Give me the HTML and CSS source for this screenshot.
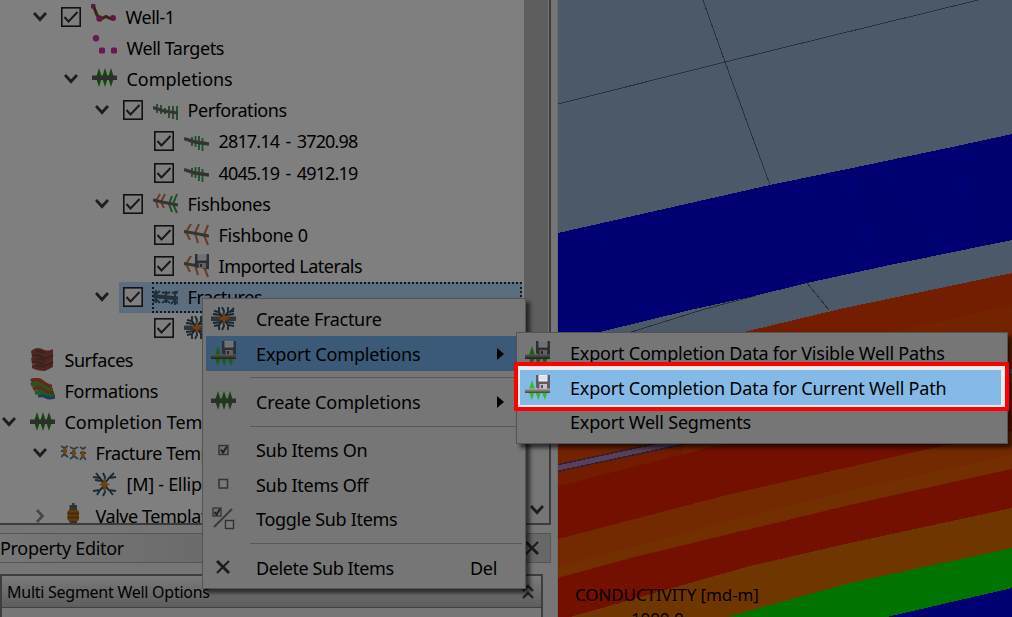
FILE: index.html
```
<!DOCTYPE html>
<html lang="en">
<head>
<meta charset="utf-8">
<title>Export Completions</title>
<link rel="stylesheet" href="styles.css">
</head>
<body>
<svg class="defs" width="0" height="0">
  <defs>
    <linearGradient id="pipe" x1="0" y1="0" x2="0" y2="1"><stop offset="0" stop-color="#b0b0b0"/><stop offset="1" stop-color="#404040"/></linearGradient>
    <symbol id="i-chev" viewBox="0 0 14 14"><path d="M1 3l6 6.500L13 3" fill="none" stroke="#3c3c3c" stroke-width="2.900"/></symbol>
    <symbol id="i-chevr" viewBox="0 0 14 14"><path d="M4 1l5.500 6L4 13" fill="none" stroke="#8a8a8a" stroke-width="2.600"/></symbol>
    <symbol id="i-check" viewBox="0 0 20 20"><rect x=".8" y=".8" width="18.400" height="18.400" fill="#fff" stroke="#222" stroke-width="1.600"/><path d="M3.500 10l4 4.500L16.500 5" fill="none" stroke="#333" stroke-width="2"/></symbol>
    <symbol id="i-well" viewBox="0 0 25 25"><path d="M2 1l4 10 3 4.500 6-3 4 2 3-.5" fill="none" stroke="#6e4a14" stroke-width="3"/><g fill="#c02a92"><rect x="0" y="0" width="4.500" height="4.500" rx="1"/><circle cx="8.500" cy="14.500" r="3.200"/><circle cx="22" cy="14" r="3"/></g></symbol>
    <symbol id="i-targets" viewBox="0 0 25 25"><g fill="#cc30a6"><circle cx="4" cy="3.200" r="3.200"/><rect x="7" y="12.500" width="6" height="6" rx="1.500"/><rect x="19" y="12.500" width="6" height="6" rx="1.500"/></g></symbol>
    <symbol id="i-comp" viewBox="0 0 25 25"><g fill="#288c14"><path d="M7 2l3 9.500L7 21l-3-9.500zM13 2l3 9.500L13 21l-3-9.500zM19 2l3 9.500L19 21l-3-9.500z"/></g><rect y="9.500" width="25" height="4.500" fill="#5c5c5c"/></symbol>
    <symbol id="i-perfs" viewBox="0 0 25 25"><path d="M4 6v9M8 7v9M16 8v12M20 8v13M24 8v14M12 10v6" stroke="#46a050" stroke-width="2"/><path d="M0 9.500l11 3.500 14 2" fill="none" stroke="#686868" stroke-width="3.200"/></symbol>
    <symbol id="i-perf" viewBox="0 0 25 25"><path d="M8 8v9M11.500 7v11M15 7v14M18.500 9v13" stroke="#46a050" stroke-width="1.900"/><path d="M0 9.500l11 3.500 14 2" fill="none" stroke="#686868" stroke-width="3.400"/></symbol>
    <symbol id="i-fishes" viewBox="0 0 25 25"><g fill="none" stroke="#dc7448" stroke-width="2"><path d="M7 3L3 10l2 7M12 3L8 11l3 6"/></g><g fill="none" stroke="#3c9c4c" stroke-width="2"><path d="M19 5l-3 8 3 8M24 3l-4 10 4 9"/></g><path d="M0 9l9 2 16 3" fill="none" stroke="#686868" stroke-width="3"/></symbol>
    <symbol id="i-fish" viewBox="0 0 25 25"><g fill="none" stroke="#dc7448" stroke-width="2.100"><path d="M7 2L2 10l4 8M15 2l-4 9 3 10M24 3l-4 10 4 10"/></g><path d="M0 9.500l9 1.500 16 3" fill="none" stroke="#686868" stroke-width="3"/></symbol>
    <symbol id="i-disk" viewBox="0 0 14 14"><path d="M0 0h14v14H2l-2-2z" fill="#5c5c66"/><rect x="2.500" width="9" height="6.500" fill="#eef0f4"/><path d="M2.500 2h9M2.500 4h9" stroke="#c6cad2" stroke-width=".7"/><rect x="3.500" y="9" width="7.500" height="5" fill="#c4c4c8"/><rect x="5" y="10" width="2" height="3" fill="#505058"/></symbol>
    <symbol id="i-fishdisk" viewBox="0 0 25 25"><use href="#i-fish" width="25" height="25"/><use href="#i-disk" x="11" y="0" width="14" height="14"/></symbol>
    <symbol id="i-frac" viewBox="0 0 25 25"><rect y="9.500" width="25" height="4.500" fill="#666"/><g fill="none" stroke="#2c4c60" stroke-width="1.800"><path d="M12 11L8 5 3 4M8 5V0M10 8L2 7M12 10l1-6-2-4M13 10l4-5 6-1M17 5V0M15 8l8-1M19 5l4-4"/><path d="M12 13l-4 5-5 1M8 18v5M10 15l-8 1M12 13l1 6-2 4M13 13l4 5 6 1M17 18v5M15 15l8 1"/></g><path d="M13 5l1.500 4.500 4 2-4 2L13 18l-1.500-4.500-4-2 4-2z" fill="#ec7a18"/></symbol>
    <symbol id="i-fracx" viewBox="0 0 25 25"><g fill="none" stroke="#345468" stroke-width="1.900"><path d="M12 12L8 6 1 5M8 6L4 1M10 9L3 8M12 11l1-6-2-4M13 11l4-5 7-1M17 6l5-5"/><path d="M12 14l-4 4-7 1M8 18l-3 5M12 14l1 6-2 4M13 14l4 4 7 1M17 18l4 5"/></g><path d="M12.500 6l1.500 4.500 4 2-4 2-1.500 6-1.500-6-4-2 4-2z" fill="#e08020"/></symbol>
    <symbol id="i-fracs" viewBox="0 0 25 25"><g fill="none" stroke="#386484" stroke-width="2"><path d="M0 7l3 2 4-3M3 5v13M0 17l3-3 4 4M9 7l4 2 4-2M13 6v12M9 18l4-3 4 3M19 7l3 2 3-3M22 6v14M18 19l4-4 3 4"/></g><path d="M0 11l25 2.500" stroke="#4c6470" stroke-width="4"/></symbol>
    <symbol id="i-fractpl" viewBox="0 0 25 25"><g fill="none" stroke="#5c7888" stroke-width="1.800"><path d="M0 5l3 2 4-2M0 10h6M0 16l3-3 4 3M9 6l4 2 4-2M9 12h6M9 18l4-3 4 3M19 6l3 2 3-2M19 12h6M19 19l3-4 3 4"/></g><g fill="#d88a28"><rect x="2" y="7" width="3.500" height="6"/><rect x="11" y="9" width="3.500" height="6"/><rect x="20" y="10" width="3.500" height="6"/></g></symbol>
    <symbol id="i-surf" viewBox="0 0 25 25"><path d="M1 4Q6-1 12 2t11 0v7q-5 4-10 1T2 10zM1 11q6-4 12-1t10-1v7q-5 4-11 1T2 17zM2 18q5-4 11-1t10-1v4l-8 4q-8 0-13-3z" fill="#a44c3c"/><path d="M2 9q6-2 11 1t10-2M2 16q6-2 11 1t10-2M6 4q6 0 9 2M6 12q6-1 9 2M6 19q5-1 9 2" fill="none" stroke="#69483e" stroke-width="1.800"/></symbol>
    <symbol id="i-form" viewBox="0 0 25 25"><g fill="none" stroke-width="4.200"><path d="M1 3q7-3 11 1t10 5" stroke="#ca5138"/><path d="M1 7q7-3 11 1t11 4" stroke="#52aa38"/><path d="M3 11q6-3 10 1t11 3" stroke="#b65a3c"/><path d="M5 15q6-2 9 1t11 2" stroke="#44b044"/><path d="M8 18q5-1 8 1t9 0" stroke="#3876b4" stroke-width="3"/></g></symbol>
    <symbol id="i-valve" viewBox="0 0 25 25"><path d="M8.500 2H11V0h2.500V2H16v22H8.500z" fill="#656565"/><rect x="6.500" y="7" width="11.500" height="11" rx="2" fill="#c07218"/><path d="M6.500 10.500H18M6.500 14.500H18" stroke="#8a4c10" stroke-width="1.300"/></symbol>
    <symbol id="i-export" viewBox="0 0 25 25"><g fill="#3aba28"><path d="M7 5l3 9.500H4zM3.500 16h6.500L6.800 25zM10 16h6.500l-3.200 9zM16.500 16H23l-3.200 9z"/></g><use href="#i-disk" x="11" y="0" width="14" height="14"/><rect y="13.500" width="25" height="4.500" fill="url(#pipe)"/></symbol>
    <symbol id="i-on" viewBox="0 0 25 25"><rect x="8" y="7.500" width="9" height="9" fill="#dcdce8" stroke="#666" stroke-width="1.400"/><path d="M10 11.500l2 3 4-6" fill="none" stroke="#404068" stroke-width="2"/></symbol>
    <symbol id="i-off" viewBox="0 0 25 25"><rect x="8" y="7.500" width="8.500" height="8.500" fill="#f2f2f2" stroke="#666" stroke-width="1.500"/></symbol>
    <symbol id="i-toggle" viewBox="0 0 25 25"><path d="M3 20L21 2" stroke="#777" stroke-width="2.200"/><rect x="2" y="1" width="8" height="8" fill="#dcdce8" stroke="#666" stroke-width="1.300"/><path d="M3.500 5l2 2.500L9 2" fill="none" stroke="#404068" stroke-width="1.900"/><rect x="14.500" y="13.500" width="8" height="8" fill="#f2f2f2" stroke="#666" stroke-width="1.400"/></symbol>
    <symbol id="i-x" viewBox="0 0 25 25"><path d="M6 6l12 12" stroke="#383838" stroke-width="3"/><path d="M18 6L6 18" stroke="#383838" stroke-width="2.200"/></symbol>
  </defs>
</svg>

<main class="app">
  <section class="side">
    <div class="tree-panel">
      <div class="tree">
        <div class="row d1"><svg class="chev"><use href="#i-chev"/></svg><svg class="cb"><use href="#i-check"/></svg><svg class="ic"><use href="#i-well"/></svg><span>Well-1</span></div>
        <div class="row d2 leaf"><svg class="ic"><use href="#i-targets"/></svg><span>Well Targets</span></div>
        <div class="row d2"><svg class="chev"><use href="#i-chev"/></svg><svg class="ic"><use href="#i-comp"/></svg><span class="wide">Completions</span></div>
        <div class="row d3"><svg class="chev"><use href="#i-chev"/></svg><svg class="cb"><use href="#i-check"/></svg><svg class="ic"><use href="#i-perfs"/></svg><span>Perforations</span></div>
        <div class="row d4 leaf"><svg class="cb"><use href="#i-check"/></svg><svg class="ic"><use href="#i-perf"/></svg><span class="num">2817.14 - 3720.98</span></div>
        <div class="row d4 leaf"><svg class="cb"><use href="#i-check"/></svg><svg class="ic"><use href="#i-perf"/></svg><span class="num">4045.19 - 4912.19</span></div>
        <div class="row d3"><svg class="chev"><use href="#i-chev"/></svg><svg class="cb"><use href="#i-check"/></svg><svg class="ic"><use href="#i-fishes"/></svg><span class="mid">Fishbones</span></div>
        <div class="row d4 leaf"><svg class="cb"><use href="#i-check"/></svg><svg class="ic"><use href="#i-fish"/></svg><span class="mid">Fishbone 0</span></div>
        <div class="row d4 leaf"><svg class="cb"><use href="#i-check"/></svg><svg class="ic"><use href="#i-fishdisk"/></svg><span>Imported Laterals</span></div>
        <div class="row d3 selected"><svg class="chev"><use href="#i-chev"/></svg><div class="sel"><svg class="cb"><use href="#i-check"/></svg><div class="focus"><svg class="ic"><use href="#i-fracs"/></svg><span>Fractures</span></div></div></div>
        <div class="row d4 leaf"><svg class="cb"><use href="#i-check"/></svg><svg class="ic"><use href="#i-frac"/></svg></div>
        <div class="row d0 leaf"><svg class="ic"><use href="#i-surf"/></svg><span>Surfaces</span></div>
        <div class="row d0 leaf"><svg class="ic"><use href="#i-form"/></svg><span class="mid">Formations</span></div>
        <div class="row d0"><svg class="chev"><use href="#i-chev"/></svg><svg class="ic"><use href="#i-comp"/></svg><span class="wide">Completion Templates</span></div>
        <div class="row d1"><svg class="chev"><use href="#i-chev"/></svg><svg class="ic"><use href="#i-fractpl"/></svg><span>Fracture Templates</span></div>
        <div class="row d2 leaf"><svg class="ic"><use href="#i-fracx"/></svg><span class="mid">[M] - Ellipse</span></div>
        <div class="row d1"><svg class="chev"><use href="#i-chevr"/></svg><svg class="ic"><use href="#i-valve"/></svg><span>Valve Templates</span></div>
      </div>
      <div class="scroll"><div class="thumb"></div><svg class="down"><use href="#i-chev"/></svg></div>
    </div>
    <div class="dock-title"><span>Property Editor</span><svg class="close"><use href="#i-x"/></svg></div>
    <div class="group">
      <div class="group-head"><span>Multi Segment Well Options</span>
        <svg class="collapse" viewBox="0 0 14 18"><path d="M2 8l5-5 5 5M2 15l5-5 5 5" fill="none" stroke="#444" stroke-width="2.400"/></svg></div>
    </div>
  </section>

  <section class="view">
    <svg class="scene" viewBox="558 0 454 617" width="454" height="617" shape-rendering="crispEdges">
      <rect x="558" width="454" height="617" fill="#96b2d0"/>
      <path d="M703 0l22 62 45 123M558 104l167-42L978 0M807 283l22 27" fill="none" stroke="#5c646c"/>
      <path d="M625 334l80-25 50-13" fill="none" stroke="#5c646c"/>
      <path d="M558 233L770 185l87-18 100-21 55-12v106l-127 26-78 17-57 14-60 13-90 22-42 10z" fill="#0000e6"/>
      <path d="M851 170l14-2 78 82-61 14zM957 148l55-12v102l-28 6z" fill="#0000de"/>
      <path d="M558 376l190-45 92-22 172-36v344H558z" fill="#e63c00"/>
      <path d="M880 335l132-30v80L700 400z" fill="#e64600"/>
      <path d="M558 405l454-75v80L558 486z" fill="#e64600"/>
      <path d="M558 470l125-27v12L558 486z" fill="#e63800"/>
      <path d="M558 486l169-43 285-60v234H558z" fill="#e62000"/>
      <path d="M558 539l169-44 223-51 62-13v38l-162 36-215 52-77 21z" fill="#e65400"/>
      <path d="M558 567l142-38 165-42 147-32v13l-162 36-215 52-77 21z" fill="#e65f00"/>
      <path d="M570 617l120-34 60-17 100-23 162-35v109z" fill="#e06c00"/>
      <path d="M727 617l123-34 162-35v69z" fill="#00e600"/>
      <path d="M887 617l125-29v29z" fill="#0000e6"/>
      <path d="M558 468l125-27 329-70" fill="none" stroke="#604264" stroke-width="8"/>
      <path d="M558 468l125-27 329-70" fill="none" stroke="#b47eb8" stroke-width="5"/>
    </svg>
    <div class="legend"><span class="legend-title">CONDUCTIVITY [md-m]</span><span class="legend-value">1000.0</span></div>
  </section>

  <div class="menu main-menu">
    <div class="item"><svg class="ic"><use href="#i-frac"/></svg><span>Create Fracture</span></div>
    <div class="item open"><svg class="ic"><use href="#i-export"/></svg><span class="loose">Export Completions</span><i class="arrow"></i></div>
    <div class="sep"></div>
    <div class="item"><svg class="ic"><use href="#i-comp"/></svg><span class="loose">Create Completions</span><i class="arrow"></i></div>
    <div class="sep"></div>
    <div class="item"><svg class="ic"><use href="#i-on"/></svg><span>Sub Items On</span></div>
    <div class="item"><svg class="ic"><use href="#i-off"/></svg><span>Sub Items Off</span></div>
    <div class="item"><svg class="ic"><use href="#i-toggle"/></svg><span>Toggle Sub Items</span></div>
    <div class="sep"></div>
    <div class="item"><svg class="ic"><use href="#i-x"/></svg><span class="tight">Delete Sub Items</span><kbd>Del</kbd></div>
  </div>

  <div class="menu sub-menu">
    <div class="item"><svg class="ic"><use href="#i-export"/></svg><span>Export Completion Data for Visible Well Paths</span></div>
    <div class="item current"><svg class="ic"><use href="#i-export"/></svg><span>Export Completion Data for Current Well Path</span></div>
    <div class="item"><svg class="ic"></svg><span>Export Well Segments</span></div>
  </div>

  <div class="spotlight"></div>
</main>
</body>
</html>
```
FILE: styles.css
```
* { box-sizing: border-box; }
body { margin: 0; font-family: "Noto Sans", "Open Sans", sans-serif; font-size: 18px; color: #000; }
.defs { position: absolute; }
svg { display: block; flex: none; }

.app { position: relative; display: flex; width: 1012px; height: 617px; overflow: hidden; background: #ececec; }
.side { width: 558px; flex: none; display: flex; flex-direction: column; border-right: 1px solid #d8d8d8; }

.tree-panel { width: 551px; height: 525px; display: flex; background: #fff; border-right: 2px solid #78787e; border-bottom: 2px solid #78787e; }
.tree { flex: 1; min-width: 0; overflow: hidden; padding-top: 1px; }
.row { display: flex; align-items: center; height: 31.2px; white-space: nowrap; letter-spacing: -0.45px; }
.row .num { letter-spacing: -0.85px; word-spacing: 2.500px; }
.row .mid { letter-spacing: -0.28px; }
.row .wide { letter-spacing: -0.05px; }
.row span { margin-left: 9.500px; }
.d0 { padding-left: 2px; }
.d1 { padding-left: 33px; }
.d2 { padding-left: 64px; }
.d3 { padding-left: 95px; }
.d4 { padding-left: 126px; }
.chev { width: 14px; height: 14px; margin-right: 14px; }
.leaf { border-left: 28px solid transparent; }
.cb { width: 20px; height: 20px; margin-right: 10px; }
.ic { width: 25px; height: 25px; overflow: visible; }
.sel { flex: 1; height: 31px; display: flex; align-items: center; margin-left: -4px; padding-left: 4px; margin-right: 2px; background: #b8daff; }
.sel .cb { margin-right: 9px; }
.focus { flex: 1; height: 31px; display: flex; align-items: center; border: 2px dotted #1c2c3c; }
.focus .ic { margin-left: -1px; }

.scroll { width: 25px; display: flex; flex-direction: column; justify-content: space-between; align-items: center; background: #ececec; }
.thumb { width: 24px; height: 420px; background: #bcbcbc; align-self: flex-start; }
.down { width: 14px; height: 14px; margin-bottom: 6px; }

.dock-title { width: 551px; height: 30px; margin-top: 8px; display: flex; align-items: center; justify-content: space-between; padding-right: 5px; background: linear-gradient(90deg, #eee, #cfcfcf 50%); border: 1px solid #aaa; border-left: 0; letter-spacing: -0.3px; }
.close { width: 25px; height: 25px; }
.group { width: 543px; margin-top: 11px; flex: 1; background: #ececec; border: 2px solid #7c7c84; border-bottom: 0; }
.group-head { height: 32px; display: flex; align-items: center; justify-content: space-between; padding: 0 6px 0 5px; background: linear-gradient(#f4f4f4, #bcbcbc); border-bottom: 1px solid #808080; font-size: 16px; letter-spacing: -0.26px; }
.collapse { width: 14px; height: 18px; }

.view { position: relative; width: 454px; overflow: hidden; }
.legend { position: absolute; left: 17px; top: 583px; display: flex; flex-direction: column; line-height: 24px; font-size: 17px; letter-spacing: -0.1px; }
.legend-value { padding-left: 56px; }

.menu { position: absolute; background: #ececec; border: 1px solid #a8a8a8; box-shadow: 4px 4px 4px rgba(0, 0, 0, 0.6); padding: 3px 3px; }
.main-menu { left: 202px; top: 298px; width: 324px; height: 291px; }
.sub-menu { left: 516px; top: 332px; width: 492px; height: 112px; }
.item { height: 34.4px; display: flex; align-items: center; padding-left: 5px; white-space: nowrap; letter-spacing: -0.3px; }
.item span { margin-left: 20px; }
.item .loose { letter-spacing: -0.13px; }
.item .tight { letter-spacing: -0.42px; }
.item.open { background: #74b4f0; }
.item.current { background: #85bae6; margin-right: 3px; }
.sub-menu .item { letter-spacing: -0.2px; }
.arrow { margin-left: auto; margin-right: 18px; border-left: 7px solid #000; border-top: 6px solid transparent; border-bottom: 6px solid transparent; }
.item kbd { margin-left: auto; margin-right: 25px; font: inherit; }
.sep { height: 14px; margin-left: 44px; display: flex; align-items: center; }
.sep::after { content: ""; flex: 1; height: 1px; background: #b0b0b0; }

/* Dims everything outside the highlighted command */
.spotlight { position: absolute; left: 514px; top: 362px; width: 495px; height: 49px; border: 4px solid #f00; box-shadow: 0 0 0 1200px rgba(0, 0, 0, 0.5); }
```
